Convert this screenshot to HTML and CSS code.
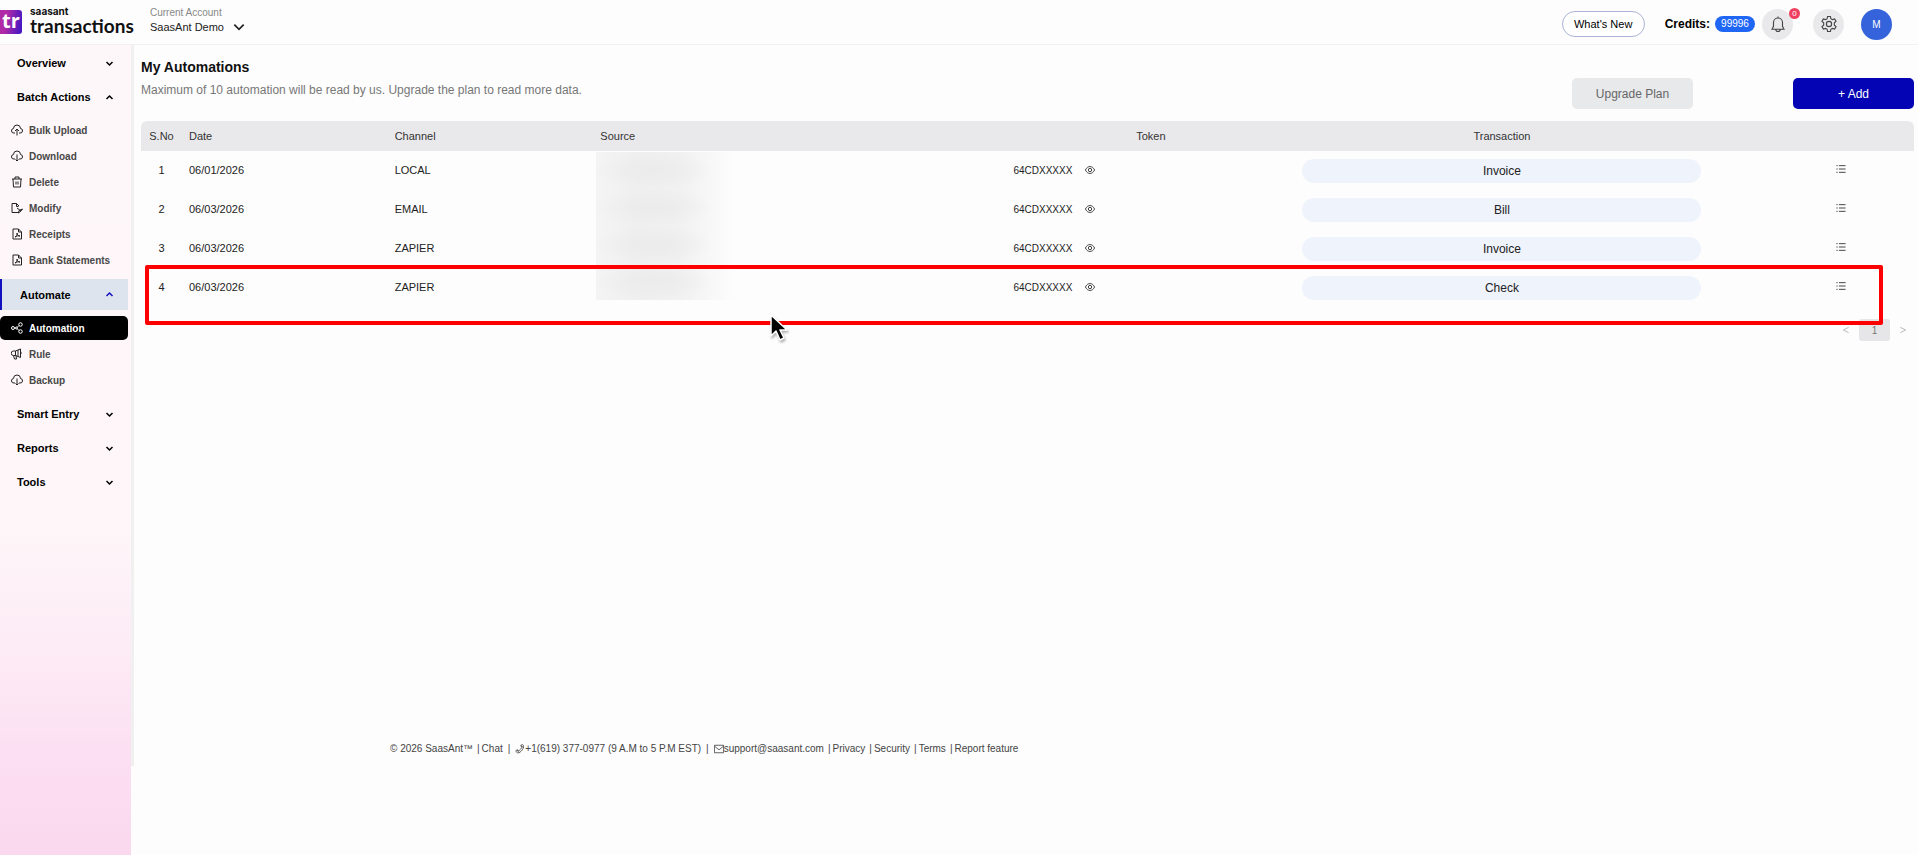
FILE: index.html
```html
<!DOCTYPE html>
<html lang="en">
<head>
<meta charset="UTF-8">
<meta name="viewport" content="width=device-width, initial-scale=1.0">
<title>My Automations</title>
<link rel="stylesheet" href="styles.css">
</head>
<body>
<!-- shared icons -->
<svg class="sprite" aria-hidden="true">
    <symbol id="down" viewBox="0 0 12 12"><path d="M2 4l4 4 4-4"/></symbol>
    <symbol id="up" viewBox="0 0 12 12"><path d="M2 8l4-4 4 4"/></symbol>
    <symbol id="cloud-up" viewBox="0 0 24 24"><path d="M8 18H6a4.500 4.500 0 0 1-1-9 7 7 0 0 1 14 0 4.500 4.500 0 0 1-1 9h-2M12 23V10M8 14l4-4 4 4"/></symbol>
    <symbol id="cloud-down" viewBox="0 0 24 24"><path d="M8 18H6a4.500 4.500 0 0 1-1-9 7 7 0 0 1 14 0 4.500 4.500 0 0 1-1 9h-2M12 9v13M9 19l3 3 3-3"/></symbol>
    <symbol id="trash" viewBox="0 0 24 24"><path d="M2 6h20M8 6V2h8v4M4 6l1 16h14l1-16M10 11v6M14 11v6"/></symbol>
    <symbol id="modify" viewBox="0 0 24 24"><path d="M15 21H2V3h9l5 5M11 3v6h4M12 12l8 6M23 14l-3 4-5 4 1-5z"/></symbol>
    <symbol id="file" viewBox="0 0 24 24"><path d="M4 2h11l6 6v14H4zM15 2v6h6M8 18c3-1 5-5 4-8 0 4 3 6 6 6-4-1-7 0-10 2"/></symbol>
    <symbol id="share" viewBox="0 0 24 24"><circle cx="4" cy="12" r="3"/><circle cx="19" cy="5" r="3.500"/><circle cx="19" cy="19" r="3.500"/><circle cx="11" cy="12" r="2"/><path d="M12 11l4-4M12 13l4 4M7 12h2"/></symbol>
    <symbol id="horn" viewBox="0 0 24 24"><path d="M9 6l10-4v17L9 15H5a4.500 4.500 0 0 1 0-9zM9 6v9M5 15l2 7h4l-1-7M19 8a3 3 0 0 1 0 5M14 4v13"/></symbol>
    <symbol id="eye" viewBox="0 0 24 24"><path d="M1 12c5-11 17-11 22 0-5 11-17 11-22 0z"/><circle cx="12" cy="12" r="4"/></symbol>
    <symbol id="list" viewBox="0 0 24 24"><path d="M1 4h3M7 4h16M1 12h3M7 12h16M1 20h3M7 20h16"/></symbol>
    <symbol id="bell" viewBox="0 0 24 24"><path d="M3 19h18M5 19v-2l1-2v-5a6 6 0 0 1 12 0v5l1 2v2M12 4V2M9 19a3 3 0 0 0 6 0"/></symbol>
    <symbol id="gear" viewBox="0 0 24 24"><circle cx="12" cy="12" r="3.500"/><path d="M9.500 5l.6-3h3.800l.6 3 2 1.200 3-1 1.900 3.300-2.300 2v3l2.300 2-1.900 3.300-3-1-2 1.200-.6 3h-3.800l-.6-3-2-1.200-3 1-1.900-3.300 2.300-2v-3l-2.300-2 1.900-3.300 3 1z"/></symbol>
    <symbol id="phone" viewBox="0 0 24 24"><path d="M4 20c-3-3-1-6 1-6l4 2c4-2 6-5 7-8l-2-4c0-2 4-4 6-1 2 4-1 10-5 14S7 23 4 20zM5 14l4 6M14 4l6 4"/></symbol>
    <symbol id="mail" viewBox="0 0 24 24"><path d="M1 3h22v18H1zM1 5l11 9 11-9"/></symbol>
</svg>

<header class="topbar">
    <a class="logo" href="#" aria-label="SaasAnt Transactions">
        <span class="logo-mark">tr</span>
        <span class="logo-text"><small>saasant</small><b>transactions</b></span>
    </a>
    <div class="account">
        <label for="account">Current Account</label>
        <div class="account-select">
            <select id="account"><option>SaasAnt Demo</option></select>
            <svg class="icon"><use href="#down"/></svg>
        </div>
    </div>
    <div class="top-actions">
        <button class="whats-new">What's New</button>
        <span class="credits">Credits: <span class="credit-count">99996</span></span>
        <button class="round bell" aria-label="Notifications"><svg class="icon"><use href="#bell"/></svg><span class="badge">0</span></button>
        <button class="round gear" aria-label="Settings"><svg class="icon"><use href="#gear"/></svg></button>
        <button class="round avatar">M</button>
    </div>
</header>

<div class="layout">
    <nav class="sidebar">
        <button class="group">Overview <svg class="icon"><use href="#down"/></svg></button>
        <button class="group">Batch Actions <svg class="icon"><use href="#up"/></svg></button>
        <div class="sub">
            <a href="#"><svg class="icon"><use href="#cloud-up"/></svg>Bulk Upload</a>
            <a href="#"><svg class="icon"><use href="#cloud-down"/></svg>Download</a>
            <a href="#"><svg class="icon"><use href="#trash"/></svg>Delete</a>
            <a href="#"><svg class="icon"><use href="#modify"/></svg>Modify</a>
            <a href="#"><svg class="icon"><use href="#file"/></svg>Receipts</a>
            <a href="#"><svg class="icon"><use href="#file"/></svg>Bank Statements</a>
        </div>
        <button class="group open">Automate <svg class="icon"><use href="#up"/></svg></button>
        <div class="sub">
            <a class="active" href="#"><svg class="icon"><use href="#share"/></svg>Automation</a>
            <a href="#"><svg class="icon"><use href="#horn"/></svg>Rule</a>
            <a href="#"><svg class="icon"><use href="#cloud-down"/></svg>Backup</a>
        </div>
        <button class="group">Smart Entry <svg class="icon"><use href="#down"/></svg></button>
        <button class="group">Reports <svg class="icon"><use href="#down"/></svg></button>
        <button class="group">Tools <svg class="icon"><use href="#down"/></svg></button>
    </nav>

    <main class="content">
        <div class="page-head">
            <div>
                <h1>My Automations</h1>
                <p>Maximum of 10 automation will be read by us. Upgrade the plan to read more data.</p>
            </div>
            <div class="page-buttons">
                <button class="upgrade">Upgrade Plan</button>
                <button class="add">+ Add</button>
            </div>
        </div>

        <div class="table-area">
            <table>
                <thead>
                    <tr>
                        <th class="col-no">S.No</th>
                        <th class="col-date">Date</th>
                        <th class="col-channel">Channel</th>
                        <th class="col-source">Source</th>
                        <th class="col-token">Token</th>
                        <th class="col-type">Transaction</th>
                        <th class="col-menu"></th>
                    </tr>
                </thead>
                <tbody>
                    <tr>
                        <td class="col-no">1</td><td>06/01/2026</td><td>LOCAL</td><td></td>
                        <td><span class="token">64CDXXXXX <button aria-label="Show token"><svg class="icon"><use href="#eye"/></svg></button></span></td>
                        <td><span class="pill">Invoice</span></td>
                        <td class="col-menu"><button aria-label="Actions"><svg class="icon"><use href="#list"/></svg></button></td>
                    </tr>
                    <tr>
                        <td class="col-no">2</td><td>06/03/2026</td><td>EMAIL</td><td></td>
                        <td><span class="token">64CDXXXXX <button aria-label="Show token"><svg class="icon"><use href="#eye"/></svg></button></span></td>
                        <td><span class="pill">Bill</span></td>
                        <td class="col-menu"><button aria-label="Actions"><svg class="icon"><use href="#list"/></svg></button></td>
                    </tr>
                    <tr>
                        <td class="col-no">3</td><td>06/03/2026</td><td>ZAPIER</td><td></td>
                        <td><span class="token">64CDXXXXX <button aria-label="Show token"><svg class="icon"><use href="#eye"/></svg></button></span></td>
                        <td><span class="pill">Invoice</span></td>
                        <td class="col-menu"><button aria-label="Actions"><svg class="icon"><use href="#list"/></svg></button></td>
                    </tr>
                    <tr>
                        <td class="col-no">4</td><td>06/03/2026</td><td>ZAPIER</td><td></td>
                        <td><span class="token">64CDXXXXX <button aria-label="Show token"><svg class="icon"><use href="#eye"/></svg></button></span></td>
                        <td><span class="pill">Check</span></td>
                        <td class="col-menu"><button aria-label="Actions"><svg class="icon"><use href="#list"/></svg></button></td>
                    </tr>
                </tbody>
            </table>
            <div class="masked"><i></i><i></i><i></i><i></i></div>
            <div class="highlight"></div>
            <svg class="pointer" viewBox="0 0 20 30"><path d="M2 2v21l5-5 4 9 4-2-4-8h7z"/></svg>
        </div>

        <div class="pager">
            <button aria-label="Previous page"><svg class="icon" viewBox="0 0 12 12"><path d="M10 2L2 6l8 4"/></svg></button>
            <button class="current">1</button>
            <button aria-label="Next page"><svg class="icon" viewBox="0 0 12 12"><path d="M2 2l8 4-8 4"/></svg></button>
        </div>

        <footer>
            <span>© 2026 SaasAnt™</span><i>|</i><a href="#">Chat</a><i class="wide">|</i>
            <a href="#"><svg class="icon"><use href="#phone"/></svg>+1(619) 377-0977 (9 A.M to 5 P.M EST)</a><i class="wide">|</i>
            <a href="#"><svg class="icon"><use href="#mail"/></svg>support@saasant.com</a><i>|</i><a href="#">Privacy</a><i>|</i><a href="#">Security</a><i>|</i><a href="#">Terms</a><i>|</i><a href="#">Report feature</a>
        </footer>
    </main>
</div>
</body>
</html>
```
FILE: styles.css
```css
* {
    box-sizing: border-box;
}
body {
    margin: 0;
    min-height: 100vh;
    display: flex;
    flex-direction: column;
    font-family: "Liberation Sans", Arial, sans-serif;
    font-size: 10px;
    color: #222;
    background-color: #fdfdfd;
}
button {
    font: inherit;
    color: inherit;
    border: 0;
    padding: 0;
    background: none;
    cursor: pointer;
}
a {
    color: inherit;
    text-decoration: none;
}
.sprite {
    position: absolute;
    width: 0;
    height: 0;
}
.icon {
    width: 12px;
    height: 12px;
    flex: none;
    fill: none;
    stroke: currentColor;
    stroke-width: 2;
}

/* top bar */
.topbar {
    display: flex;
    align-items: center;
    height: 45px;
    padding-right: 26px;
    border-bottom: 1px solid #f1f1f2;
}
.logo {
    display: flex;
    align-items: center;
    gap: 8px;
    width: 150px;
    color: #111;
}
.logo-mark {
    width: 22px;
    height: 24px;
    border-radius: 0 3px 3px 0;
    background: linear-gradient(100deg, #b02aa8 30%, #3a16c4);
    color: #fff;
    font: bold 20px/21px "Open Sans", sans-serif;
    text-align: center;
}
.logo-text {
    display: flex;
    flex-direction: column;
    padding-bottom: 2px;
    font-family: Lato, sans-serif;
}
.logo-text small {
    font: bold 10px/10px Inter, sans-serif;
}
.logo-text b {
    font-size: 19px;
    line-height: 20px;
}
.account {
    padding-bottom: 4px;
}
.account label {
    display: block;
    color: #888;
    line-height: 14px;
}
.account-select {
    display: flex;
    align-items: center;
}
.account select {
    appearance: none;
    width: 82px;
    border: 0;
    padding: 0;
    background: none;
    font: inherit;
    font-size: 11px;
    line-height: 14px;
    color: #222;
}
.account-select .icon {
    width: 14px;
    height: 14px;
    stroke-width: 1.5;
}
.top-actions {
    display: flex;
    align-items: center;
    margin-left: auto;
    padding-top: 4px;
}
.whats-new {
    width: 83px;
    height: 26px;
    margin-right: 20px;
    border: 1px solid #a9b3d6;
    border-radius: 13px;
    background-color: #fff;
    font-size: 11px;
    color: #000;
}
.credits {
    display: flex;
    align-items: center;
    gap: 5px;
    margin-right: 7px;
    font-size: 12px;
    font-weight: bold;
    color: #000;
}
.credit-count {
    width: 40px;
    border-radius: 8px;
    background-color: #1f66f5;
    color: #fff;
    font-size: 10px;
    font-weight: normal;
    line-height: 16px;
    text-align: center;
}
.round {
    position: relative;
    display: flex;
    align-items: center;
    justify-content: center;
    width: 31px;
    height: 31px;
    border-radius: 50%;
    background-color: #e9e9eb;
    color: #444;
}
.round .icon {
    width: 18px;
    height: 18px;
    stroke-width: 1.5;
}
.bell {
    margin-right: 20px;
}
.gear {
    margin-right: 17px;
}
.badge {
    position: absolute;
    top: -1px;
    right: -7px;
    width: 11px;
    border-radius: 50%;
    background-color: #f0405f;
    color: #fff;
    font-size: 8px;
    line-height: 11px;
}
.avatar {
    background-color: #3563dc;
    color: #fff;
}

/* sidebar */
.layout {
    display: flex;
    flex: 1;
}
.sidebar {
    flex: none;
    width: 131px;
    padding-top: 1px;
    background: linear-gradient(#fef7f9, #fef6f9 60%, #fdebf5 75%, #fcdff2 88%, #fad8ee);
}
.group {
    display: flex;
    align-items: center;
    justify-content: space-between;
    width: 128px;
    height: 34px;
    padding: 0 14px 0 17px;
    font-size: 11px;
    font-weight: bold;
    color: #000;
}
.group .icon {
    width: 9px;
    height: 9px;
}
.group.open {
    height: 31px;
    padding-left: 18px;
    border-left: 2px solid #1111c0;
    background-color: #dee4ee;
}
.group.open .icon {
    color: #1111c0;
}
.sub {
    padding: 3px 0 5px;
}
.group.open + .sub {
    padding: 5px 0 3px;
}
.sub a {
    display: flex;
    align-items: center;
    gap: 6px;
    width: 128px;
    height: 24px;
    margin: 1px 0 2px;
    padding-left: 11px;
    border-radius: 5px;
    font-weight: bold;
    color: #484848;
}
.sub .icon {
    color: #222;
}
.sub .active, .active .icon {
    background-color: #000;
    color: #fff;
}

/* content */
.content {
    display: flex;
    flex: 1;
    flex-direction: column;
    align-self: flex-start;
    min-width: 0;
    min-height: 721px;
    padding: 13px 4px 9px 7px;
    border-left: 3px solid #f0f0f1;
}
.page-head {
    display: flex;
    justify-content: space-between;
    height: 63px;
}
h1 {
    margin: 0;
    font-size: 14px;
    line-height: 18px;
    color: #111;
}
.page-head p {
    margin: 6px 0 0;
    font-size: 12px;
    line-height: 16px;
    color: #777;
}
.page-buttons {
    display: flex;
    gap: 100px;
    padding-top: 20px;
}
.page-buttons button {
    width: 121px;
    height: 31px;
    border-radius: 5px;
    font-size: 12px;
}
.page-buttons .upgrade {
    background-color: #e8e9eb;
    color: #666;
}
.page-buttons .add {
    background-color: #0404b4;
    color: #fff;
}
.table-area {
    position: relative;
}
table {
    width: 100%;
    table-layout: fixed;
    border-collapse: collapse;
    font-size: 11px;
}
th {
    height: 30px;
    padding: 0 7px;
    background-color: #e9e9ec;
    font-weight: normal;
    text-align: left;
    color: #333;
}
th:first-child {
    border-top-left-radius: 6px;
}
th:last-child {
    border-top-right-radius: 6px;
}
td {
    height: 39px;
    padding: 0 7px 1px;
}
th.col-no {
    width: 41px;
}
.col-no {
    padding: 0 0 1px;
    text-align: center;
}
.col-date, .col-channel {
    width: 11.6%;
}
.col-source {
    width: 23.3%;
}
.col-token {
    width: 16.3%;
    text-align: center;
}
.col-type {
    width: 23.3%;
    text-align: center;
}
.col-menu {
    padding-right: 68px;
    text-align: right;
}
td .icon {
    display: block;
    width: 10px;
    height: 10px;
}
.token {
    display: flex;
    align-items: center;
    gap: 13px;
    font-size: 10px;
}
.pill {
    display: block;
    margin-top: 1px;
    border-radius: 12px;
    background-color: #eff3fc;
    font-size: 12px;
    line-height: 24px;
    text-align: center;
}

/* hidden source names */
.masked {
    position: absolute;
    top: 31px;
    left: 455px;
    display: grid;
    width: 140px;
    height: 148px;
    background: linear-gradient(90deg, #f4f4f5, #efeff0 30%, #f1f1f2 60%, #fdfdfd);
}
.masked i {
    background: radial-gradient(closest-side at 42% 50%, #ebebec, transparent);
}
.highlight {
    position: absolute;
    top: 144px;
    right: 31px;
    left: 4px;
    height: 60px;
    border: 4px solid #fe0000;
    border-radius: 2px;
    z-index: 1;
}
.pointer {
    position: absolute;
    top: 192px;
    left: 628px;
    width: 20px;
    height: 30px;
    overflow: visible;
    fill: #000;
    stroke: #fff;
    stroke-width: 1.5;
    stroke-linejoin: round;
    filter: drop-shadow(1px 2px 1px rgba(0,0,0,0.3));
    z-index: 2;
}
.pager {
    display: flex;
    justify-content: flex-end;
    gap: 5px;
    margin-top: 12px;
    padding-right: 3px;
    color: #bbb;
}
.pager button {
    width: 16px;
    height: 22px;
}
.pager .icon {
    width: 8px;
    height: 8px;
    stroke-width: 1.5;
}
.pager .current {
    width: 31px;
    border-radius: 3px;
    background-color: #e6e6e9;
    color: #777;
}
footer {
    display: flex;
    align-items: center;
    margin-top: auto;
    padding-left: 249px;
    line-height: 16px;
    color: #444;
}
footer a {
    display: flex;
    align-items: center;
}
footer i {
    margin: 0 2px 0 4px;
    font-style: normal;
}
footer .wide {
    margin: 0 5px;
}
footer .icon {
    width: 10px;
    height: 10px;
}
```
